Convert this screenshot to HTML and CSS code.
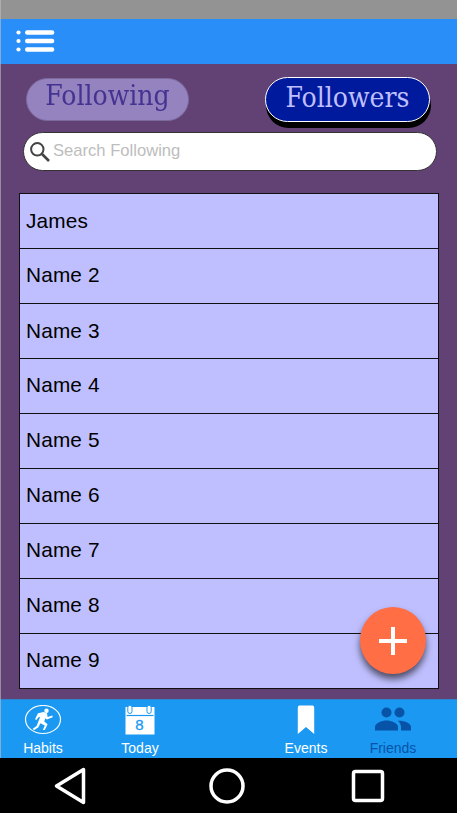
FILE: index.html
```html
<!DOCTYPE html>
<html lang="en">
<head>
<meta charset="utf-8">
<title>Friends</title>
<link rel="stylesheet" href="styles.css">
</head>
<body>
<div class="phone">
  <div class="status"></div>
  <header class="topbar">
    <svg width="40" height="24" viewBox="0 0 40 24" fill="#fff">
      <circle cx="2.5" cy="3.5" r="2.1"/><circle cx="2.5" cy="12" r="2.1"/><circle cx="2.5" cy="20.5" r="2.1"/>
      <rect x="9" y="1.2" width="29.3" height="4.6" rx="2.2"/><rect x="9" y="9.7" width="29.3" height="4.6" rx="2.2"/><rect x="9" y="18.2" width="29.3" height="4.6" rx="2.2"/>
    </svg>
  </header>
  <main class="content">
    <div class="tabs">
      <div class="tab tab-dim"><span>Following</span></div>
      <div class="tab tab-active"><span>Followers</span></div>
    </div>
    <div class="search">
      <svg width="20" height="20" viewBox="0 0 20 20" fill="none" stroke="#444"><circle cx="7.3" cy="7.3" r="6.2" stroke-width="2"/><path d="M12 12l7 7" stroke-width="2.6"/></svg>
      <span>Search Following</span>
    </div>
    <ul class="list">
      <li>James</li>
      <li>Name 2</li>
      <li>Name 3</li>
      <li>Name 4</li>
      <li>Name 5</li>
      <li>Name 6</li>
      <li>Name 7</li>
      <li>Name 8</li>
      <li>Name 9</li>
    </ul>
    <div class="fab">
      <svg width="30" height="30" viewBox="0 0 30 30" fill="#fff"><path d="M13 1h4v12h12v4H17v12h-4V17H1v-4h12z"/></svg>
    </div>
  </main>
  <nav class="nav">
    <div class="item">
      <svg width="38" height="30" viewBox="0 0 38 30">
        <ellipse cx="19" cy="14.500" rx="17.500" ry="14" fill="none" stroke="#fff" stroke-width="1.200"/>
        <circle cx="22.500" cy="5.800" r="2.200" fill="#fff"/>
        <path fill="#fff" d="M14 8.300l5.500-1.200 3.500 1.200.6 3.800 4.700-1.500.4 1.600-5.900 2.300-1.400-1.200-1.200 3.300 3.400 2.700-2.800 5.800h-2l2-4.700-4.400-2.200-2 4.100-4.400 3-1.200-1.600 3.800-2.800 3.600-9.100-2 .6-1.800 2.700-1.400-.8z"/>
      </svg>
      <span>Habits</span>
    </div>
    <div class="item">
      <svg width="30" height="30" viewBox="0 0 30 30">
        <path d="M.5 2h29v27.500H.5z" fill="#fff"/>
        <path d="M1.500 10.500h27" stroke="#1b99f2" stroke-width="1.200"/>
        <g fill="#fff" stroke="#1b99f2"><rect x="2.800" y=".3" width="4.200" height="8.200" rx="2.100"/><rect x="22" y=".3" width="4.200" height="8.200" rx="2.100"/></g>
        <text class="day" x="14.500" y="25" text-anchor="middle">8</text>
      </svg>
      <span>Today</span>
    </div>
    <div class="item events">
      <svg width="18" height="30" viewBox="0 0 18 30" fill="#fff"><path d="M2.500.5h13Q17.200.5 17.200 2.500v26.500L9 22 .8 29V2.500Q.8.5 2.500.5z"/></svg>
      <span>Events</span>
    </div>
    <div class="item current">
      <svg width="38" height="30" viewBox="0 0 38 30" fill="#0753a8">
        <circle cx="12.500" cy="7.500" r="5"/><circle cx="25.500" cy="7.500" r="5"/>
        <path d="M1 25.500V22C1 18 8 15.500 12.500 15.500S24 18 24 22v3.500z"/>
        <path d="M23.700 15.700C30 15.300 37 18 37 22v3.500H27V22c0-2.700-1.300-4.800-3.300-6.300z"/>
      </svg>
      <span>Friends</span>
    </div>
  </nav>
  <footer class="system">
    <svg width="36" height="40" viewBox="0 0 36 40"><path d="M30.500 3.500v33L3.500 20z"/></svg>
    <svg width="38" height="38" viewBox="0 0 38 38"><circle cx="19" cy="19" r="16"/></svg>
    <svg width="34" height="34" viewBox="0 0 34 34"><rect x="2.500" y="2.500" width="29" height="29" rx="2"/></svg>
  </footer>
</div>
</body>
</html>
```
FILE: styles.css
```css
* { box-sizing: border-box; }
body {
  margin: 0;
  background: #fff;
  font-family: "Liberation Sans", Arial, sans-serif;
}
svg { display: block; flex: none; }
.phone {
  position: relative;
  width: 457px;
  height: 813px;
  display: flex;
  flex-direction: column;
  overflow: hidden;
}
.phone::after {
  content: "";
  position: absolute;
  left: 0;
  top: 0;
  width: 1px;
  height: 758px;
  background: rgba(190, 190, 190, .6);
}
.status { height: 19px; background: #939393; }
.topbar { height: 45px; padding: 10px 16px; background: #2a8ef9; }
.content {
  position: relative;
  height: 635px;
  padding: 13px 18px 0 19px;
  background: #624275;
}
.tabs {
  display: flex;
  justify-content: space-between;
  height: 55px;
  padding: 0 9px 0 7px;
}
.tab {
  display: flex;
  justify-content: center;
  border-radius: 24px;
  font: 28px/40px "DejaVu Serif Condensed", "DejaVu Serif", serif;
  font-stretch: condensed;
}
.tab-dim {
  width: 163px;
  height: 43px;
  margin-top: 1px;
  background: #9583bf;
  border: 1px solid #7c6c9d;
  color: #443391;
  line-height: 34px;
  filter: blur(.5px);
}
.tab-active {
  width: 165px;
  height: 45px;
  background: #001a9e;
  border: 1px solid #fff;
  color: #bfbfff;
  box-shadow: 1px 6px 0 #000;
}
.search {
  display: flex;
  align-items: center;
  gap: 3px;
  width: 414px;
  height: 39px;
  margin-left: 4px;
  padding: 0 6px;
  background: #fff;
  border: 1px solid #333;
  border-radius: 20px;
  color: #bdbdbd;
  font-size: 16.6px;
}
.search span { margin-top: -2px; }
.list {
  width: 420px;
  margin: 22px 0 0;
  padding: 0;
  list-style: none;
  border: 1px solid #111;
  background: #bfbfff;
}
.list li {
  height: 55px;
  padding-left: 6px;
  border-bottom: 1px solid #111;
  font-size: 20.8px;
  line-height: 51px;
  letter-spacing: .15px;
  color: #000;
}
.list li:first-child, .list li:nth-child(3) { line-height: 53px; }
.list li:last-child { border-bottom: 0; height: 54px; }
.fab {
  position: absolute;
  left: 360px;
  top: 543px;
  width: 66px;
  height: 67px;
  border-radius: 50%;
  background: #ff6e45;
  box-shadow: 0 5px 7px rgba(0, 0, 0, .6);
  display: flex;
  align-items: center;
  justify-content: center;
}
.nav {
  display: grid;
  grid-template-columns: 86px 108px 68px 88px 86px;
  height: 59px;
  background: #1b99f2;
  border-top: 1px solid #2b86d0;
}
.item {
  display: flex;
  flex-direction: column;
  align-items: center;
  gap: 5px;
  padding-top: 5px;
  color: #fff;
  font-size: 14px;
  line-height: 16px;
}
.events { grid-column: 4; }
.current { color: #0753a8; }
.day { font: 15px "Liberation Sans", Arial, sans-serif; fill: #1b99f2; stroke: #1b99f2; stroke-width: .3px; }
.system {
  display: flex;
  align-items: center;
  gap: 105px;
  height: 55px;
  padding-left: 53px;
  background: #000;
}
.system svg { fill: none; stroke: #fff; stroke-width: 3.5px; stroke-linejoin: round; }
.system svg:first-child { margin-right: 14px; }
```
